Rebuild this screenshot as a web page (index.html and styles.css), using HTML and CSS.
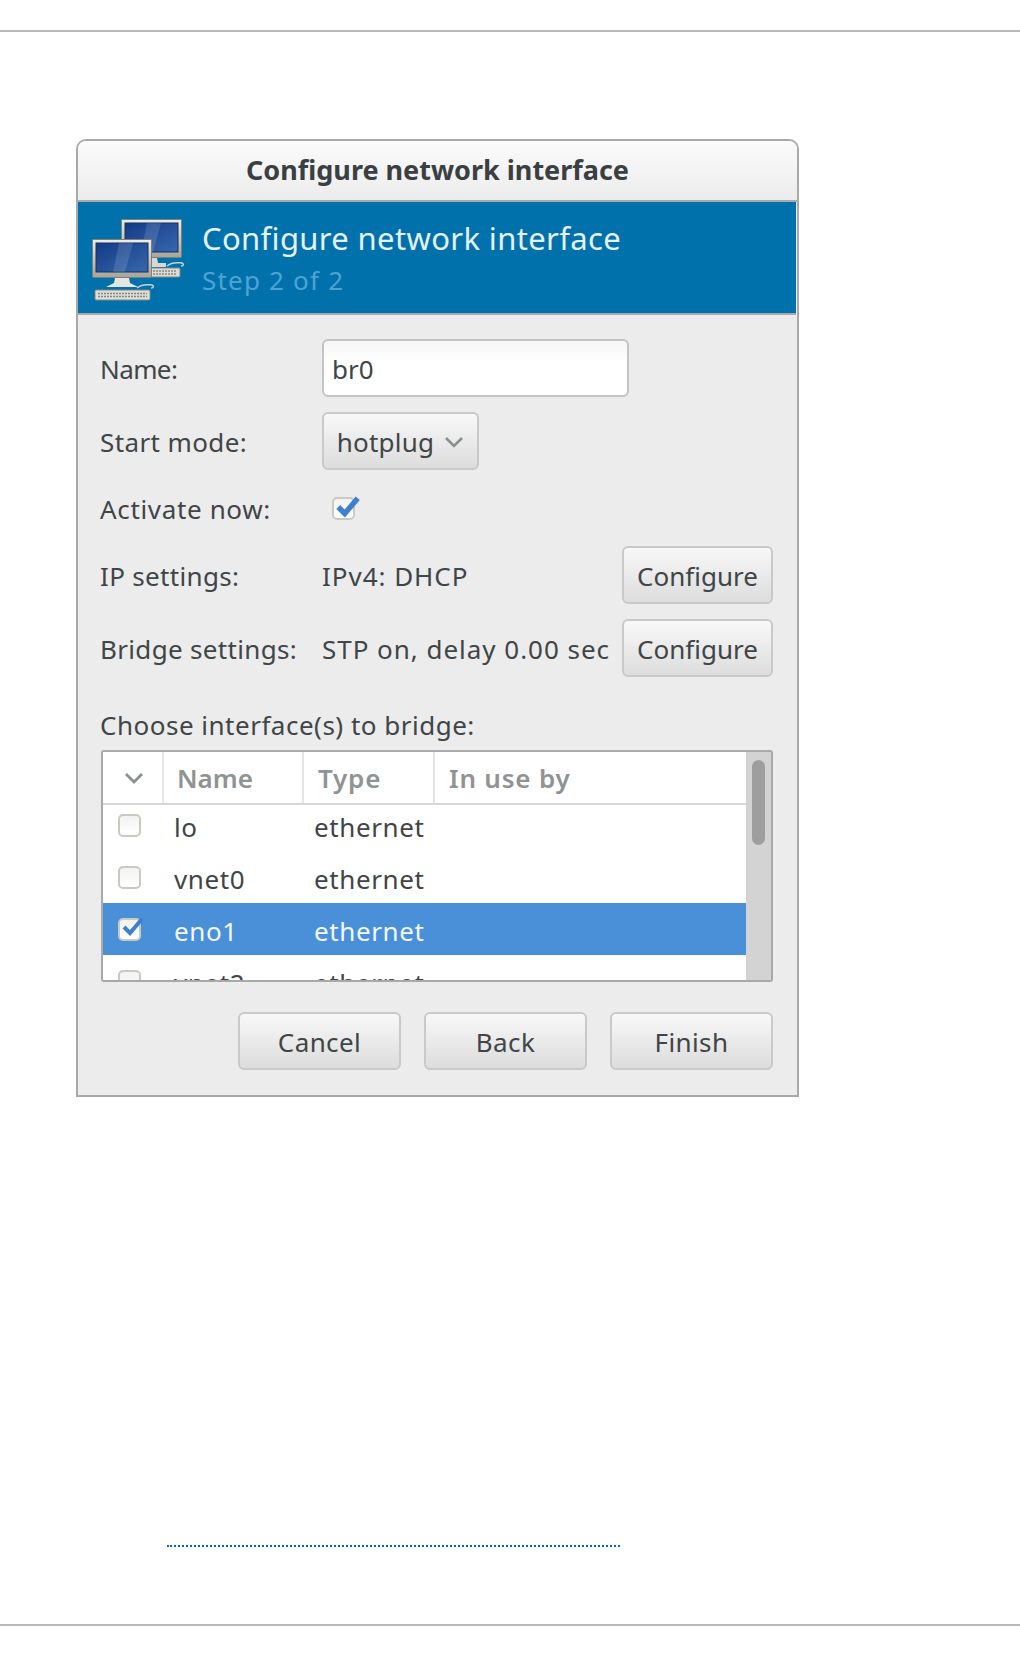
FILE: index.html
```html
<!DOCTYPE html>
<html lang="en">
<head>
<meta charset="utf-8">
<title>Configure network interface</title>
<link rel="stylesheet" href="styles.css">
</head>
<body>
<hr class="rule rule-top">
<section class="dialog">
  <header class="titlebar">Configure network interface</header>
  <div class="banner">
    <svg class="banner-icon" width="94" height="84" viewBox="0 0 94 84" aria-hidden="true">
      <defs>
        <linearGradient id="scr" x1="0" y1="0" x2="1" y2="1"><stop offset="0" stop-color="#123a86"/><stop offset="1" stop-color="#3768ad"/></linearGradient>
        <linearGradient id="frm" x1="0" y1="0" x2="0" y2="1"><stop offset="0" stop-color="#ecece8"/><stop offset="1" stop-color="#a5a5a0"/></linearGradient>
      </defs>
      <g>
        <rect x="30.500" y="1.500" width="60" height="38" rx="1" fill="url(#frm)" stroke="#7f7f78"/>
        <rect x="34" y="5" width="53" height="29" fill="url(#scr)" stroke="#1a2f5c"/>
        <path d="M56 5h14l-8 29h-12z" fill="#fff" opacity=".13"/>
        <path d="M52 40h14l1 5h8v4h-24v-4z" fill="#d8d8d2"/>
        <rect x="56" y="50" width="33" height="9" rx="1" fill="#dcdcd6" stroke="#85857f"/>
        <path d="M59 53h27M59 56h27" stroke="#85857f" stroke-width="1.500" stroke-dasharray="2 1"/>
        <path d="M76 48c6-5 12-3 15-3 2 1 2 3-1 3" fill="none" stroke="#c6d2da" stroke-width="1.500"/>
      </g>
      <g>
        <rect x="1.500" y="21.500" width="59" height="38" rx="1" fill="url(#frm)" stroke="#7f7f78"/>
        <rect x="5" y="25" width="52" height="29" fill="url(#scr)" stroke="#1a2f5c"/>
        <path d="M28 25h14l-8 29h-12z" fill="#fff" opacity=".13"/>
        <path d="M24 60h14l1 5 8 4h-32l8-4z" fill="#e6e6e0"/>
        <rect x="4" y="72" width="55" height="10" rx="1" fill="#dedfd9" stroke="#85857f"/>
        <path d="M7 75.500h49M7 78.500h49" stroke="#85857f" stroke-width="1.500" stroke-dasharray="2 1"/>
        <path d="M46 70c6-5 12-3 15-3 2 1 2 3-1 3" fill="none" stroke="#c6d2da" stroke-width="1.500"/>
      </g>
    </svg>
    <div class="banner-text">
      <div class="banner-title">Configure network interface</div>
      <div class="banner-step">Step 2 of 2</div>
    </div>
  </div>
  <div class="content">
    <div class="row">
      <span class="label t-name">Name:</span>
      <div class="entry">br0</div>
    </div>
    <div class="row">
      <span class="label t-start">Start mode:</span>
      <div class="button combo">hotplug
        <svg class="chevron" width="20" height="12" viewBox="0 0 20 12" aria-hidden="true"><path d="M2 2l8 8 8-8" fill="none" stroke="#8b8e8f" stroke-width="2.500"/></svg>
      </div>
    </div>
    <div class="row row-check">
      <span class="label t-activate">Activate now:</span>
      <span class="check check-offset is-on">
        <svg class="tick" width="26" height="24" viewBox="0 0 24 22" aria-hidden="true"><path d="M3 11l6 6L21 3" fill="none" stroke="#3f7fd0" stroke-width="5"/></svg>
      </span>
    </div>
    <div class="row">
      <span class="label t-bridge">IP settings:</span>
      <span class="value t-value">IPv4: DHCP</span>
      <div class="button configure">Configure</div>
    </div>
    <div class="row">
      <span class="label t-bridge">Bridge settings:</span>
      <span class="value t-value">STP on, delay 0.00 sec</span>
      <div class="button configure">Configure</div>
    </div>
    <div class="choose">Choose interface(s) to bridge:</div>
    <div class="list">
      <div class="list-main">
        <div class="list-head">
          <div class="head-cell head-sort"><svg width="20" height="12" viewBox="0 0 20 12" aria-hidden="true"><path d="M2 2l8 8 8-8" fill="none" stroke="#8b8e8f" stroke-width="2.800"/></svg></div>
          <div class="head-cell head-name">Name</div>
          <div class="head-cell t-head">Type</div>
          <div class="head-cell head-last t-head">In use by</div>
        </div>
        <div class="list-body">
          <div class="list-row"><div class="cell-check"><span class="check"></span></div><div class="cell-name">lo</div><div class="cell-type">ethernet</div></div>
          <div class="list-row"><div class="cell-check"><span class="check"></span></div><div class="cell-name">vnet0</div><div class="cell-type">ethernet</div></div>
          <div class="list-row is-selected"><div class="cell-check"><span class="check is-on"><svg class="tick" width="24" height="22" viewBox="0 0 24 22" aria-hidden="true"><path d="M3 11l6 6L21 3" fill="none" stroke="#3f7fd0" stroke-width="4"/></svg></span></div><div class="cell-name">eno1</div><div class="cell-type">ethernet</div></div>
          <div class="list-row"><div class="cell-check"><span class="check"></span></div><div class="cell-name">vnet2</div><div class="cell-type">ethernet</div></div>
        </div>
      </div>
      <div class="scrollbar"><div class="thumb"></div></div>
    </div>
    <div class="actions">
      <div class="button action">Cancel</div>
      <div class="button action">Back</div>
      <div class="button action">Finish</div>
    </div>
  </div>
</section>
<div class="dotted-link"></div>
<hr class="rule rule-bottom">
</body>
</html>
```
FILE: styles.css
```css
* { box-sizing: border-box; }
html, body { margin: 0; padding: 0; background: #fff; }
body {
  height: 1656px;
  overflow: hidden;
  font-family: "Noto Sans", "Open Sans", sans-serif;
  font-size: 26px;
  color: #404547;
}
.rule { display: block; height: 2px; margin: 0; border: 0; background: #b9b9b9; }
.rule-top { margin-top: 30px; }
.rule-bottom { margin-top: 77px; }

.dialog {
  width: 723px;
  height: 958px;
  margin: 107px 0 0 76px;
  border: 2px solid #a9a9a9;
  border-radius: 10px 10px 0 0;
  background: #ececec;
  overflow: hidden;
}
.titlebar {
  height: 61px;
  padding-bottom: 3px;
  border-bottom: 2px solid #ababab;
  background: linear-gradient(#fbfbfb, #ececec);
  display: flex;
  align-items: center;
  justify-content: center;
  font-weight: 700;
  font-size: 27px;
  color: #3a4042;
}
.banner {
  height: 113px;
  margin-right: 1px;
  border-bottom: 2px solid #a9a9a9;
  background: #0071ab;
  display: flex;
  align-items: center;
  padding-left: 13px;
}
.banner-icon { flex: none; margin-top: 4px; }
.banner-text { margin-left: 17px; padding-top: 2px; }
.banner-title { font-size: 31px; line-height: 44px; color: #e6f1f7; letter-spacing: .35px; }
.banner-step { font-size: 26px; line-height: 41px; color: #4fa3d3; letter-spacing: 1.2px; }

.content { padding: 24px 24px 0 22px; }
.row { display: flex; align-items: center; height: 58px; margin-bottom: 15px; }
.row-check { height: 46px; }
.label { flex: none; width: 222px; padding-top: 2px; }
.value { flex: 1; padding-top: 2px; white-space: nowrap; }
.t-name { letter-spacing: -.6px; }
.t-start { letter-spacing: .4px; }
.t-activate { letter-spacing: .65px; }
.t-bridge { letter-spacing: .33px; }
.t-value { letter-spacing: .97px; }
.entry {
  width: 307px;
  height: 58px;
  border: 2px solid #c4c4c4;
  border-radius: 6px;
  background: linear-gradient(#f6f6f6, #fff 40%);
  padding-left: 8px;
  line-height: 56px;
}
.button {
  display: flex;
  align-items: center;
  justify-content: center;
  height: 58px;
  padding-top: 2px;
  border: 2px solid #c9c9c9;
  border-radius: 6px;
  background: linear-gradient(#f8f8f8, #dddddd);
}
.combo { width: 157px; gap: 10px; letter-spacing: .2px; }
.chevron { flex: none; }
.configure { flex: none; width: 151px; }

.check {
  display: block;
  position: relative;
  width: 23px;
  height: 23px;
  border: 2px solid #c9cbc3;
  border-radius: 5px;
  background: linear-gradient(#f2f2f2, #fff);
}
.check-offset { margin-left: 10px; }
.tick { position: absolute; left: 1px; top: -4px; }

.choose { height: 58px; padding-top: 16px; line-height: 34px; letter-spacing: .5px; }
.list {
  display: flex;
  width: 672px;
  height: 232px;
  margin-left: 1px;
  border: 2px solid #a9a9a9;
  border-radius: 3px;
  background: #fff;
  overflow: hidden;
}
.list-main { flex: 1; min-width: 0; }
.list-head, .list-row { display: grid; grid-template-columns: 61px 140px 131px 1fr; }
.list-head { position: relative; height: 53px; border-bottom: 2px solid #d6d6d6; background: #fff; }
.head-cell {
  display: flex;
  align-items: center;
  padding-left: 14px;
  border-right: 2px solid #e6e6e6;
  font-weight: 600;
  color: #8f9393;
}
.head-name { padding-left: 13px; }
.t-head { letter-spacing: .8px; }
.head-sort { padding-left: 21px; }
.head-last { border-right: 0; }
.list-body { margin-top: -6px; }
.list-row { height: 52px; align-items: center; letter-spacing: .6px; }
.cell-name { padding: 3px 0 0 10px; }
.cell-type { padding: 3px 0 0 10px; }
.cell-check { padding-left: 15px; }
.is-selected { background: #4a90d9; color: #f2f7fc; }
.scrollbar { flex: none; width: 25px; background: #d3d3d3; padding: 8px 6px 0; }
.thumb { height: 85px; border-radius: 7px; background: #9e9e9e; }

.actions { display: flex; justify-content: flex-end; gap: 23px; margin-top: 30px; }
.action { flex: none; width: 163px; letter-spacing: .4px; }

.dotted-link { width: 453px; height: 2px; margin: 448px 0 0 167px; border-top: 2px dotted #0066cc; }
```
